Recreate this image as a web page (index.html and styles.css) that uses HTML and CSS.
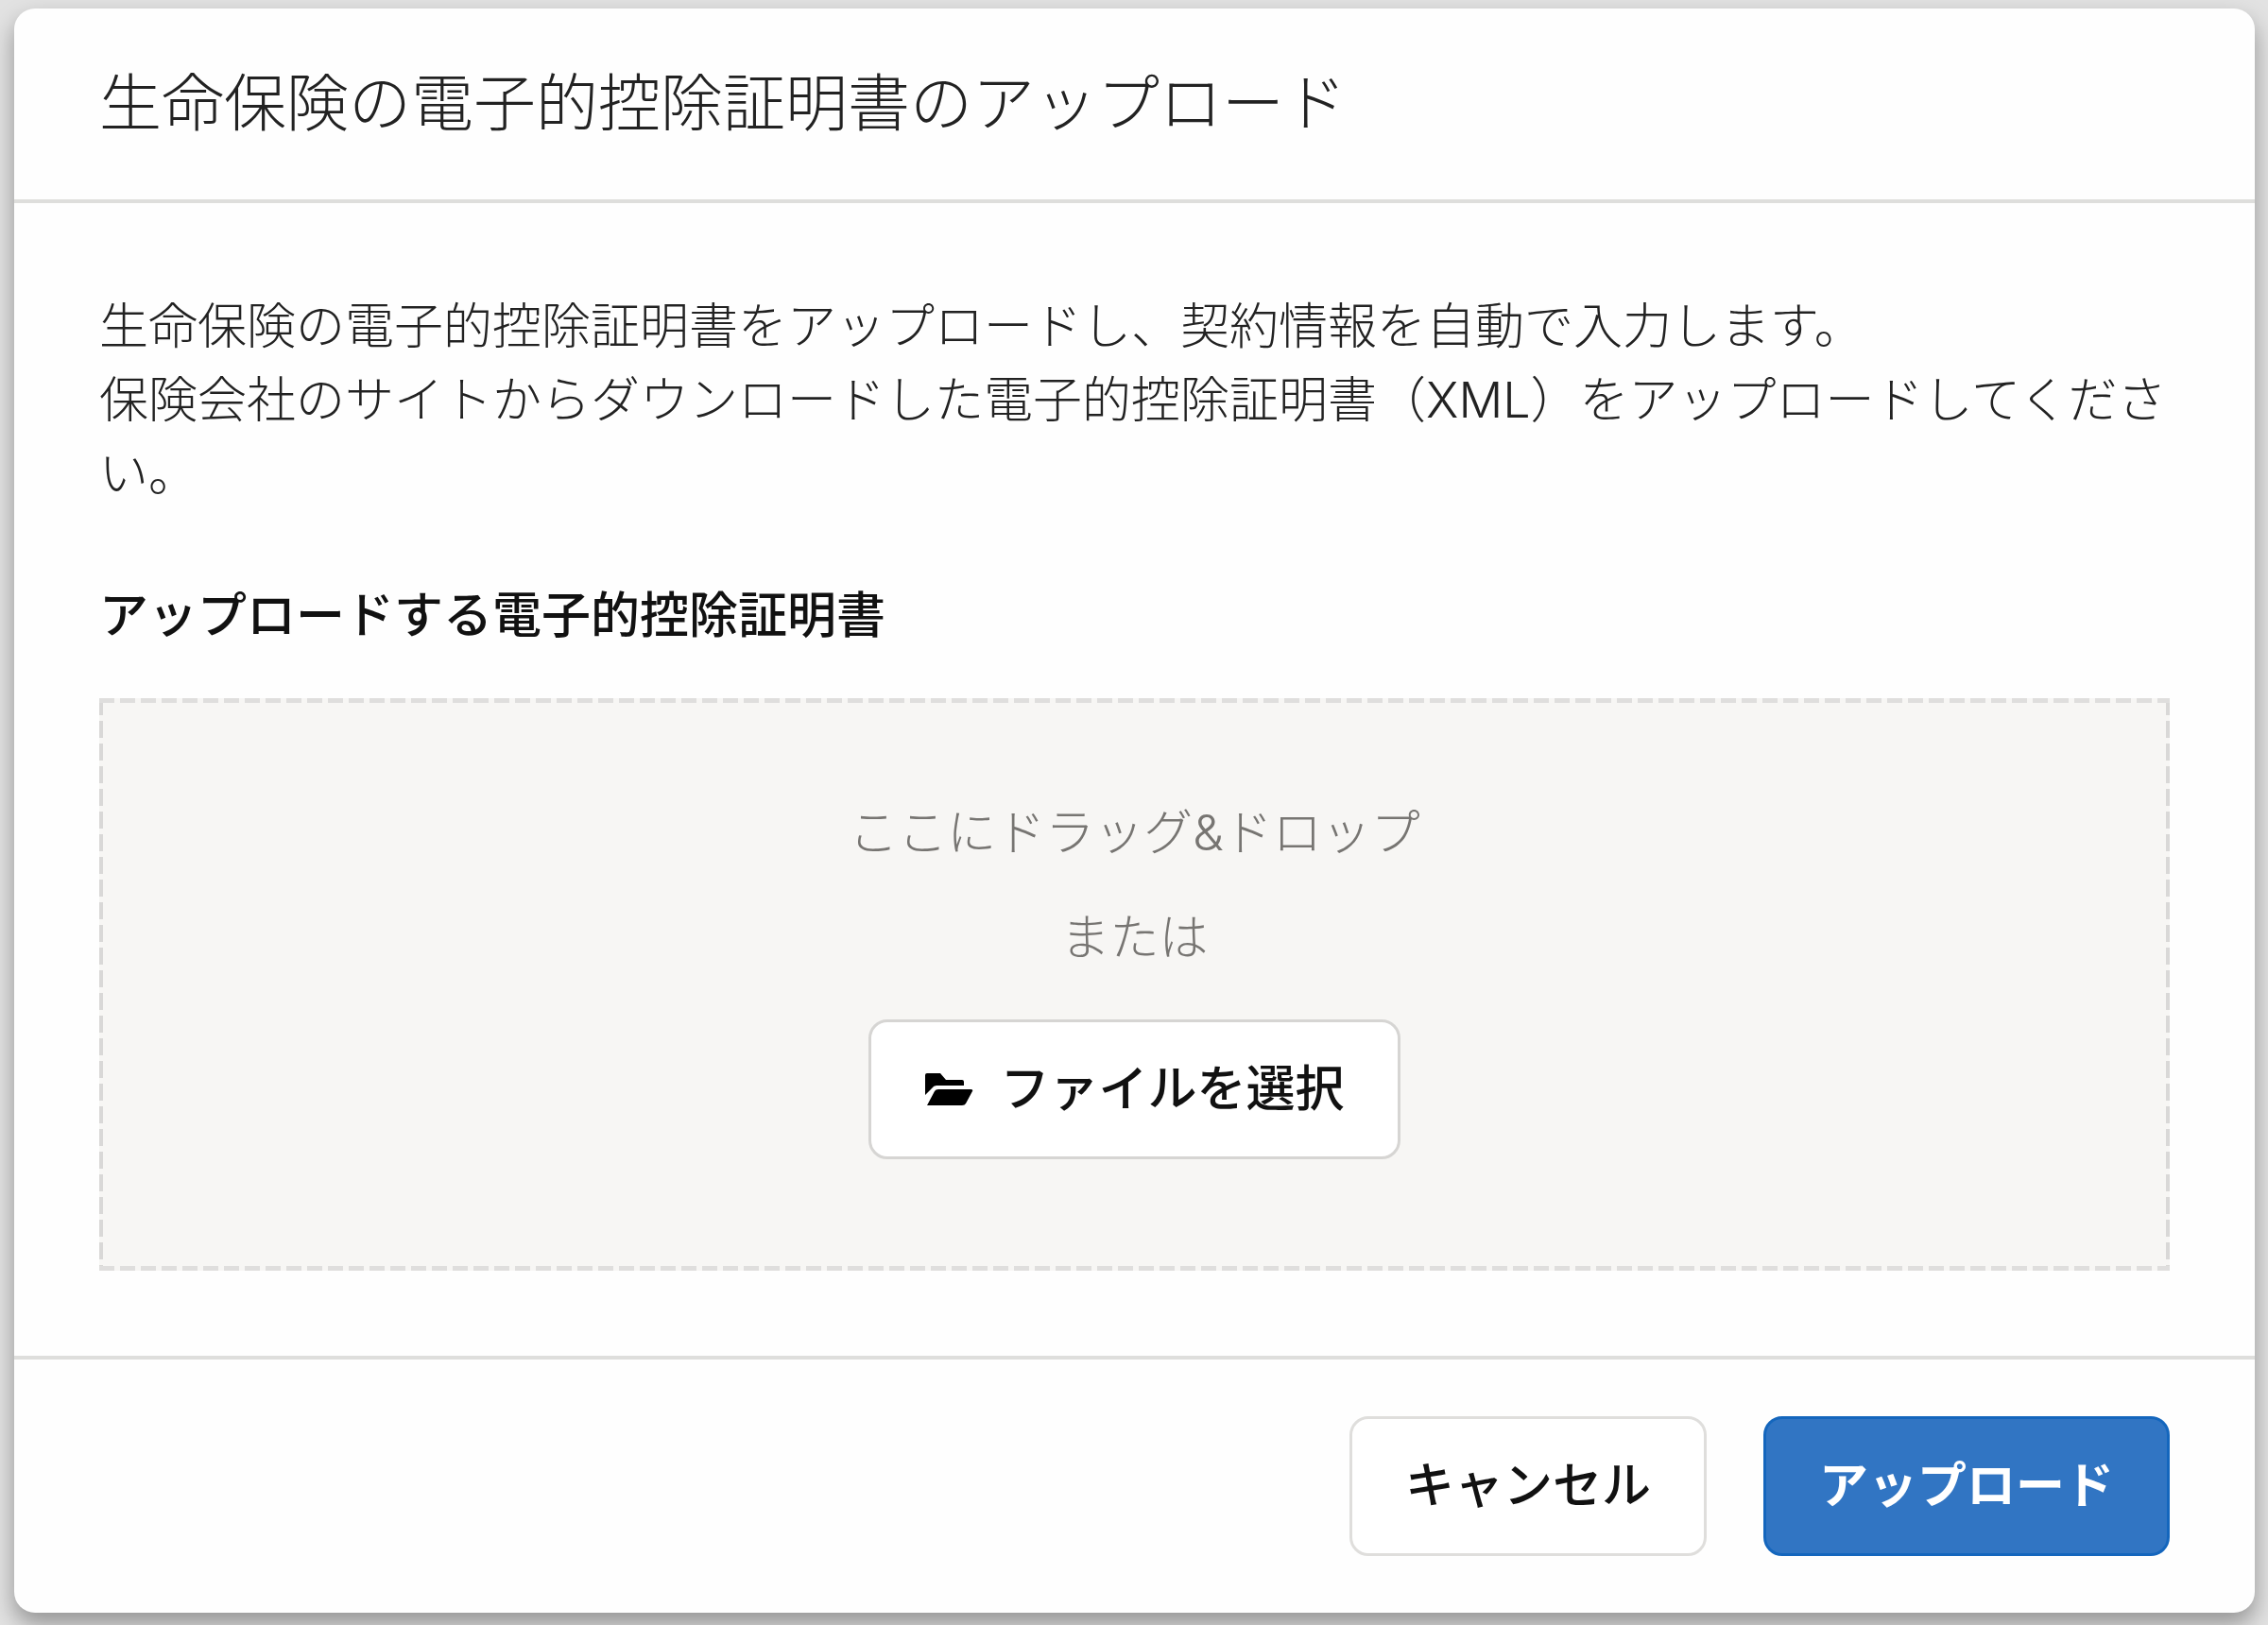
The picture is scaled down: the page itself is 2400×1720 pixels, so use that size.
FILE: index.html
```html
<!DOCTYPE html>
<html lang="ja">
<head>
  <meta charset="UTF-8">
  <meta name="viewport" content="width=device-width, initial-scale=1.0">
  <title>生命保険の電子的控除証明書のアップロード</title>
  <link rel="stylesheet" href="styles.css">
</head>
<body>
  <div class="modal" role="dialog" aria-labelledby="modal-title">
    <header class="modal-header">
      <h1 class="modal-title" id="modal-title">生命保険の電子的控除証明書のアップロード</h1>
    </header>

    <main class="modal-body">
      <p class="description">生命保険の電子的控除証明書をアップロードし、契約情報を自動で入力します。<br>保険会社のサイトからダウンロードした電子的控除証明書（XML）をアップロードしてください。</p>

      <h2 class="field-label" id="file-label">アップロードする電子的控除証明書</h2>
      <div class="dropzone" role="group" aria-labelledby="file-label">
        <p class="dropzone-text">ここにドラッグ&amp;ドロップ</p>
        <p class="dropzone-text">または</p>
        <button type="button" class="btn btn-file">
          <svg class="icon" viewBox="0 0 52 36" aria-hidden="true">
            <path d="M1 24V3q0-2 2-2h14l6 7h17q2 0 2 2v4H13q-3 0-5 3z"/>
            <path d="M3 35l8-15q1-2 4-2h34q3 0 2 2l-7 13q-1 2-4 2z"/>
          </svg>
          ファイルを選択
        </button>
      </div>
    </main>

    <footer class="modal-footer">
      <button type="button" class="btn">キャンセル</button>
      <button type="submit" class="btn btn-primary">アップロード</button>
    </footer>
  </div>
</body>
</html>
```
FILE: styles.css
```css
* {
  box-sizing: border-box;
}
body {
  margin: 0;
  padding: 9px 14px 14px 15px;
  background: #e2e2e2;
  color: #222;
  font-family: Inter, "Noto Sans CJK JP", sans-serif;
  font-size: 52px;
  font-weight: 300;
  line-height: 78px;
}
h1, h2, p {
  margin: 0;
}
.modal {
  background: #fefefe;
  border-radius: 22px;
  box-shadow: 0 12px 24px rgba(0, 0, 0, 0.35);
}
.modal-header {
  padding: 50px 90px 52px;
  border-bottom: 4px solid #dededc;
}
.modal-title {
  font-size: 66px;
  font-weight: 300;
  line-height: 100px;
}
.modal-body {
  padding: 92px 90px 90px;
}
.field-label {
  margin: 72px 0 48px;
  color: #111;
  font-size: 52px;
  font-weight: 500;
}
/* dashes are drawn by hand, the built-in dashed border is too fine */
.dropzone {
  display: flex;
  flex-direction: column;
  align-items: center;
  gap: 33px;
  padding: 104px 40px 118px;
  background:
    repeating-linear-gradient(90deg, #dfdedd 0 16px, transparent 16px 22px) top / 100% 5px no-repeat,
    repeating-linear-gradient(90deg, #dfdedd 0 16px, transparent 16px 22px) bottom / 100% 5px no-repeat,
    repeating-linear-gradient(#d9d8d7 0 18px, transparent 18px 24px) left / 4px 100% no-repeat,
    repeating-linear-gradient(#d9d8d7 0 18px, transparent 18px 24px) right / 4px 100% no-repeat,
    #f7f6f4;
}
.dropzone-text {
  color: #777572;
}
.btn {
  display: inline-flex;
  align-items: center;
  justify-content: center;
  height: 148px;
  padding: 0 56px;
  background: #fff;
  border: 3px solid #dfdedc;
  border-radius: 20px;
  color: #111;
  font-family: inherit;
  font-size: 52px;
  font-weight: 500;
  line-height: 78px;
  cursor: pointer;
}
.btn:hover {
  opacity: 0.8;
}
.btn-file {
  gap: 28px;
  margin-top: 14px;
  border-color: #d6d5d3;
}
.btn-primary {
  background: #3175c3;
  border-color: #1466bd;
  color: #fff;
  font-weight: 700;
}
.icon {
  width: 52px;
  height: 36px;
  fill: #000;
}
.modal-footer {
  display: flex;
  justify-content: flex-end;
  gap: 60px;
  padding: 60px 90px;
  border-top: 4px solid #dededc;
}
```
